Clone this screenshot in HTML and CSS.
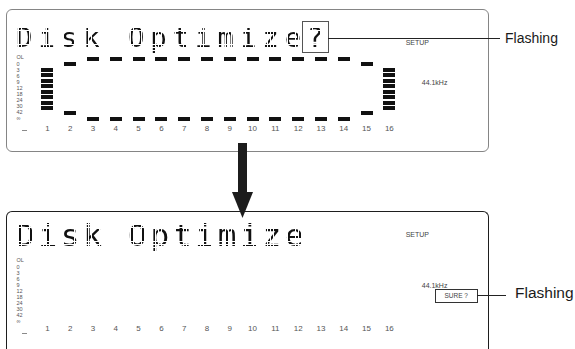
FILE: index.html
```html
<!DOCTYPE html>
<html>
<head>
	<meta charset="utf-8">
	<title>Disk Optimize</title>
	<link rel="stylesheet" href="styles.css">
</head>
<body>
	<div class="stage">

		<div class="row">
			<div class="panel p1">
				<div class="head">
					<div class="lcd"><span class="dots">Disk Optimize</span><span class="q"><span class="dots">?</span></span></div>
					<div class="setup">SETUP</div>
				</div>
				<div class="meters">
					<div class="scale">
						<p class="ol">OL</p><p>0</p><p>3</p><p>6</p><p>9</p><p>12</p><p>18</p><p>24</p><p>30</p><p>42</p><p>∞</p>
						<span class="minus"></span>
					</div>
					<div class="ch"><div class="lvl bar"><i></i><i></i><i></i><i></i><i></i><i></i><i></i><i></i></div><p class="num">1</p></div>
					<div class="ch"><div class="lvl edge"><b></b><b></b></div><p class="num">2</p></div>
					<div class="ch"><div class="lvl"><b></b><b></b></div><p class="num">3</p></div>
					<div class="ch"><div class="lvl"><b></b><b></b></div><p class="num">4</p></div>
					<div class="ch"><div class="lvl"><b></b><b></b></div><p class="num">5</p></div>
					<div class="ch"><div class="lvl"><b></b><b></b></div><p class="num">6</p></div>
					<div class="ch"><div class="lvl"><b></b><b></b></div><p class="num">7</p></div>
					<div class="ch"><div class="lvl"><b></b><b></b></div><p class="num">8</p></div>
					<div class="ch"><div class="lvl"><b></b><b></b></div><p class="num">9</p></div>
					<div class="ch"><div class="lvl"><b></b><b></b></div><p class="num">10</p></div>
					<div class="ch"><div class="lvl"><b></b><b></b></div><p class="num">11</p></div>
					<div class="ch"><div class="lvl"><b></b><b></b></div><p class="num">12</p></div>
					<div class="ch"><div class="lvl"><b></b><b></b></div><p class="num">13</p></div>
					<div class="ch"><div class="lvl"><b></b><b></b></div><p class="num">14</p></div>
					<div class="ch"><div class="lvl edge"><b></b><b></b></div><p class="num">15</p></div>
					<div class="ch"><div class="lvl bar"><i></i><i></i><i></i><i></i><i></i><i></i><i></i><i></i></div><p class="num">16</p></div>
					<div class="side">
						<p class="freq">44.1kHz</p>
					</div>
				</div>
			</div>
			<div class="note n1">Flashing</div>
		</div>

		<div class="gap">
			<svg class="arrow" width="21" height="75" viewBox="0 0 21 75">
				<rect x="6" y="0" width="9" height="50" fill="#1c1c1c"/>
				<polygon points="0,49 21,49 10.5,75" fill="#1c1c1c"/>
			</svg>
		</div>

		<div class="row">
			<div class="panel p2">
				<div class="head">
					<div class="lcd"><span class="dots">Disk Optimize</span></div>
					<div class="setup">SETUP</div>
				</div>
				<div class="meters">
					<div class="scale">
						<p class="ol">OL</p><p>0</p><p>3</p><p>6</p><p>9</p><p>12</p><p>18</p><p>24</p><p>30</p><p>42</p><p>∞</p>
						<span class="minus"></span>
					</div>
					<div class="ch"><div class="lvl"></div><p class="num">1</p></div>
					<div class="ch"><div class="lvl"></div><p class="num">2</p></div>
					<div class="ch"><div class="lvl"></div><p class="num">3</p></div>
					<div class="ch"><div class="lvl"></div><p class="num">4</p></div>
					<div class="ch"><div class="lvl"></div><p class="num">5</p></div>
					<div class="ch"><div class="lvl"></div><p class="num">6</p></div>
					<div class="ch"><div class="lvl"></div><p class="num">7</p></div>
					<div class="ch"><div class="lvl"></div><p class="num">8</p></div>
					<div class="ch"><div class="lvl"></div><p class="num">9</p></div>
					<div class="ch"><div class="lvl"></div><p class="num">10</p></div>
					<div class="ch"><div class="lvl"></div><p class="num">11</p></div>
					<div class="ch"><div class="lvl"></div><p class="num">12</p></div>
					<div class="ch"><div class="lvl"></div><p class="num">13</p></div>
					<div class="ch"><div class="lvl"></div><p class="num">14</p></div>
					<div class="ch"><div class="lvl"></div><p class="num">15</p></div>
					<div class="ch"><div class="lvl"></div><p class="num">16</p></div>
					<div class="side">
						<p class="freq">44.1kHz</p>
						<div class="sure">SURE ?</div>
					</div>
				</div>
			</div>
			<div class="note n2">Flashing</div>
		</div>

	</div>
</body>
</html>
```

FILE: styles.css
```css
body{
	margin: 0px;
	padding: 0px;
	width: 575px;
	height: 349px;
	overflow: hidden;
	background: #ffffff;
	color: #222222;
	font-family: "Liberation Sans", Arial, sans-serif;
}

p{
	margin: 0px;
}

.stage{
	padding: 9px 0px 0px 6px;
}

.row{
	display: flex;
	align-items: flex-start;
}

.panel{
	box-sizing: border-box;
	width: 483px;
	height: 143px;
	border: 1.5px solid #858585;
	border-radius: 6px;
	padding-left: 9px;
}

.p2{
	height: 150px;
	border-color: #1e1e1e;
	border-bottom: 0px;
	border-radius: 6px 6px 0px 0px;
}

/* title line */
.head{
	display: flex;
	align-items: flex-start;
	box-sizing: border-box;
	height: 43.5px;
	padding-top: 10.5px;
}

.lcd{
	font-family: "DejaVu Sans Mono", monospace;
	font-size: 27.4px;
	letter-spacing: 5.9px;
	line-height: 32px;
	height: 32px;
	color: #111111;
	white-space: pre;
}

/* dot matrix look: cut the glyphs into a grid of small cells */
.dots{
	display: inline-block;
	-webkit-mask-image:
		repeating-linear-gradient(90deg, #000 0px 2.3px, transparent 2.3px 2.8px),
		repeating-linear-gradient(180deg, #000 0px 2.35px, transparent 2.35px 2.86px);
	-webkit-mask-composite: source-in;
	mask-image:
		repeating-linear-gradient(90deg, #000 0px 2.3px, transparent 2.3px 2.8px),
		repeating-linear-gradient(180deg, #000 0px 2.35px, transparent 2.35px 2.86px);
	mask-composite: intersect;
}

.p2 .head{
	height: 44.5px;
	padding-top: 7px;
}

.p2 .lcd{
	font-size: 31px;
	letter-spacing: 3.75px;
}

.q{
	position: relative;
	display: inline-block;
	letter-spacing: 0px;
	padding: 0px 4px;
	margin-left: -5px;
	border: 1px solid #555555;
	height: 30px;
}

.q:after{
	content: "";
	position: absolute;
	left: 100%;
	top: 16px;
	width: 172px;
	border-top: 1px solid #222222;
}

.setup{
	margin-left: auto;
	margin-right: 59px;
	margin-top: 18px;
	font-size: 7px;
	line-height: 8px;
	color: #444444;
}

.p2 .setup{
	margin-top: 12px;
}

/* meter area */
.meters{
	display: flex;
	align-items: flex-start;
}

.scale{
	width: 20px;
	padding-left: 0.5px;
	box-sizing: border-box;
	font-size: 5.5px;
	line-height: 6px;
	color: #555555;
}

.scale .ol{
	margin-bottom: 1px;
}

.scale .minus{
	display: block;
	margin: 9px 0px 0px 5px;
	width: 5px;
	height: 1px;
	background: #8a8a8a;
}

.ch{
	width: 22.8px;
	display: flex;
	flex-direction: column;
	align-items: center;
}

.lvl{
	box-sizing: border-box;
	height: 67px;
	width: 100%;
	padding-top: 3px;
	display: flex;
	flex-direction: column;
	align-items: center;
	justify-content: space-between;
}

.lvl.edge{
	padding: 8px 0px 6px;
}

.lvl.bar{
	padding: 14px 0px 0px;
	justify-content: flex-start;
	gap: 1.5px;
}

.lvl b{
	display: block;
	width: 12px;
	height: 4px;
	background: #111111;
}

.lvl i{
	display: block;
	width: 12px;
	height: 4px;
	background: #111111;
}

.num{
	margin-top: 3px;
	font-size: 8px;
	line-height: 10px;
	color: #555555;
}

.p2 .num{
	margin-top: 0px;
}

.side{
	margin-left: 21px;
}

.freq{
	margin-top: 25px;
	font-size: 7px;
	line-height: 8px;
	color: #444444;
}

.sure{
	position: relative;
	box-sizing: border-box;
	margin: -1px 0px 0px 13px;
	width: 43px;
	height: 14px;
	border: 1px solid #333333;
	font-size: 6.5px;
	line-height: 12px;
	text-align: center;
	color: #444444;
}

.sure:after{
	content: "";
	position: absolute;
	left: 100%;
	top: 5px;
	width: 29px;
	border-top: 1px solid #222222;
}

/* callouts */
.note{
	color: #1a1a1a;
	white-space: nowrap;
}

.n1{
	margin-left: 16px;
	margin-top: 21px;
	font-size: 14px;
	line-height: 16px;
}

.n2{
	margin-left: 26px;
	margin-top: 73px;
	font-size: 15.5px;
	line-height: 18px;
}

.gap{
	position: relative;
	height: 59px;
}

.arrow{
	position: absolute;
	left: 226px;
	top: -9px;
}
```
